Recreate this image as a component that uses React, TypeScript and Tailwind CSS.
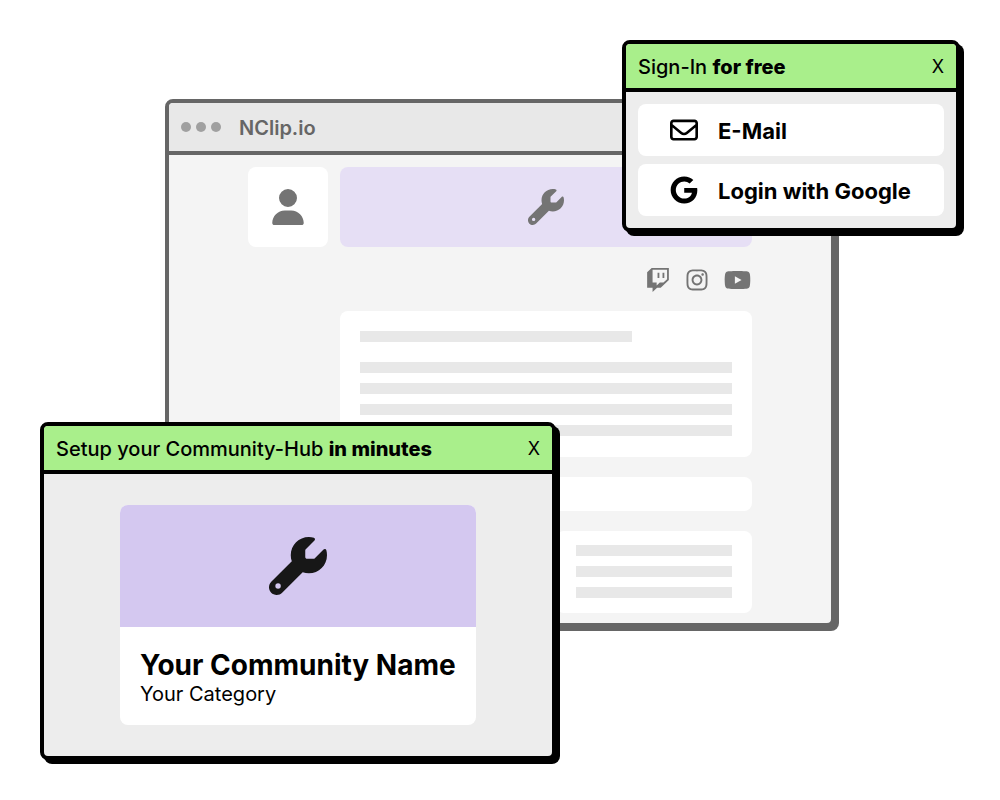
import React from 'react';
import { FaGoogle, FaInstagram, FaRegEnvelope, FaTwitch, FaUser, FaWrench, FaYoutube } from 'react-icons/fa6';

interface PopupProps {
  title: string;
  highlight: string;
  className: string;
  children: React.ReactNode;
}

/**
 * Floating window with a green title bar and a close button
 */
const Popup: React.FC<PopupProps> = ({ title, highlight, className, children }) => {
  return (
    <section
      className={`absolute flex flex-col overflow-hidden rounded-lg border-4 border-black bg-[#ededed] shadow-[4px_4px_0_#000] ${className}`}
    >
      <header className="flex h-12 items-center justify-between border-b-4 border-black bg-[#a9ef8b] px-3 pt-[2px]">
        <h2 className="text-xl font-medium">
          {title} <b className="font-extrabold">{highlight}</b>
        </h2>
        <button type="button" aria-label="Close" className="text-lg leading-6">
          X
        </button>
      </header>
      {children}
    </section>
  );
};

interface LoginButtonProps {
  icon: React.ReactNode;
  label: string;
}

const LoginButton: React.FC<LoginButtonProps> = ({ icon, label }) => {
  return (
    <button type="button" className="flex h-13 items-center gap-5 rounded-lg bg-white px-8 text-[22px] font-bold">
      {icon}
      <span className="pt-[2px]">{label}</span>
    </button>
  );
};

/** Grey placeholder for a line of text */
const Line: React.FC<{ className?: string }> = ({ className = 'w-full' }) => (
  <div className={`h-[11px] bg-[#e8e8e8] ${className}`} />
);

/**
 * Greyed out browser window with the skeleton of a hub page
 */
const BrowserPreview: React.FC = () => {
  return (
    <section className="mx-auto w-[67%] overflow-hidden rounded-lg border-4 border-[#666] bg-[#f4f4f4] text-[#666] shadow-[4px_4px_0_#666]">
      <header className="flex h-13 items-center border-b-4 border-[#666] bg-[#e8e8e8] px-3">
        <div className="flex gap-[5px]">
          <span className="size-[10px] rounded-full bg-[#a0a0a0]" />
          <span className="size-[10px] rounded-full bg-[#a0a0a0]" />
          <span className="size-[10px] rounded-full bg-[#a0a0a0]" />
        </div>
        <h1 className="ml-[18px] pt-[2px] text-xl font-semibold">NClip.io</h1>
      </header>

      <div className="mx-auto flex max-w-[504px] flex-col pt-3 pb-[10px]">
        <div className="flex gap-3">
          <div className="flex size-20 items-center justify-center rounded-lg bg-white">
            <FaUser className="size-9 text-[#747474]" />
          </div>
          <div className="flex h-20 flex-1 items-center justify-center rounded-lg bg-[#e6dff5]">
            <FaWrench className="size-9 text-[#747474]" />
          </div>
        </div>

        {/* Social links */}
        <nav className="flex h-16 items-center justify-end gap-4 pt-[2px] pr-px text-[#747474]">
          <a href="#twitch" aria-label="Twitch">
            <FaTwitch className="size-6" />
          </a>
          <a href="#instagram" aria-label="Instagram">
            <FaInstagram className="h-6 w-[22px]" />
          </a>
          <a href="#youtube" aria-label="YouTube">
            <FaYoutube className="h-6 w-[27px]" />
          </a>
        </nav>

        {/* Content blocks */}
        <div className="ml-[92px] flex flex-col gap-5">
          <div className="flex flex-col gap-[10px] rounded-lg bg-white px-5 pt-5 pb-[21px]">
            <Line className="mb-[10px] w-[73%]" />
            <Line />
            <Line />
            <Line />
            <Line />
          </div>
          <div className="h-[34px] rounded-lg bg-white" />
          <div className="grid grid-cols-2 gap-5">
            <div className="flex flex-col gap-[10px] rounded-lg bg-white px-5 pt-[14px] pb-[15px]">
              <Line />
              <Line />
              <Line />
            </div>
            <div className="flex flex-col gap-[10px] rounded-lg bg-white px-5 pt-[14px] pb-[15px]">
              <Line />
              <Line />
              <Line />
            </div>
          </div>
        </div>
      </div>
    </section>
  );
};

const App: React.FC = () => {
  return (
    <main className="relative min-h-screen bg-white pt-[99px] font-['Inter',sans-serif] text-black">
      <BrowserPreview />

      <Popup title="Sign-In" highlight="for free" className="top-10 right-10 w-[338px]">
        <div className="flex flex-col gap-2 p-3">
          <LoginButton icon={<FaRegEnvelope className="size-7" />} label="E-Mail" />
          <LoginButton icon={<FaGoogle className="size-7" />} label="Login with Google" />
        </div>
      </Popup>

      <Popup title="Setup your Community-Hub" highlight="in minutes" className="top-[422px] left-10 w-[516px]">
        <div className="px-[76px] py-[31px]">
          <article className="overflow-hidden rounded-lg bg-white">
            <div className="flex h-[122px] items-center justify-center bg-[#d4c8f0]">
              <FaWrench className="size-[58px] text-[#171717]" />
            </div>
            <div className="px-5 pt-5 pb-5">
              <h3 className="text-[28px] leading-9 font-bold">Your Community Name</h3>
              <p className="text-xl leading-[22px]">Your Category</p>
            </div>
          </article>
        </div>
      </Popup>
    </main>
  );
};

export default App;
